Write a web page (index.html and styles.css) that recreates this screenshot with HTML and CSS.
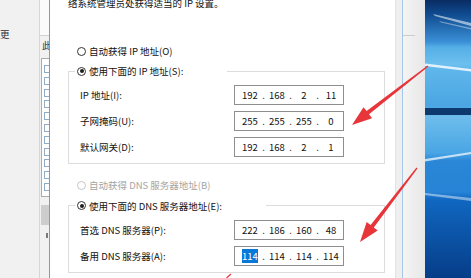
FILE: index.html
```html
<!DOCTYPE html>
<html lang="zh-CN">
<head>
<meta charset="utf-8">
<title>IPv4 属性</title>
<link rel="stylesheet" href="styles.css">
</head>
<body>
<div class="screen">
  <div class="bgwin">
    <div class="bgwin-main"><span class="bg-text">更</span></div>
    <div class="bgwin-col">
      <div class="lw-box"></div>
      <div class="lw-label">此</div>
      <div class="lw-list">
        <i class="lw-item"></i><i class="lw-item"></i><i class="lw-item"></i><i class="lw-item"></i>
        <i class="lw-item"></i><i class="lw-item"></i><i class="lw-item"></i><i class="lw-item"></i>
        <i class="lw-item"></i><i class="lw-item"></i><i class="lw-item"></i>
      </div>
      <div class="lw-btn"></div>
      <div class="lw-mark"></div>
    </div>
  </div>
  <div class="dlg-edge"></div>

  <div class="dialog">
    <p class="intro">络系统管理员处获得适当的 IP 设置。</p>

    <div class="radio-row opt-first"><span class="radio"></span>自动获得 IP 地址(O)</div>

    <fieldset class="group">
      <legend><span class="radio-row"><span class="radio checked"></span>使用下面的 IP 地址(S):</span></legend>
      <div class="fields">
        <label class="lbl">IP 地址(I):</label>
        <div class="ip"><span class="f">192</span><span class="d">.</span><span class="f">168</span><span class="d">.</span><span class="f">2</span><span class="d">.</span><span class="f">11</span></div>
        <label class="lbl">子网掩码(U):</label>
        <div class="ip"><span class="f">255</span><span class="d">.</span><span class="f">255</span><span class="d">.</span><span class="f">255</span><span class="d">.</span><span class="f">0</span></div>
        <label class="lbl">默认网关(D):</label>
        <div class="ip"><span class="f">192</span><span class="d">.</span><span class="f">168</span><span class="d">.</span><span class="f">2</span><span class="d">.</span><span class="f">1</span></div>
      </div>
    </fieldset>

    <div class="radio-row opt-dns-auto is-disabled"><span class="radio"></span>自动获得 DNS 服务器地址(B)</div>

    <fieldset class="group group-dns">
      <legend><span class="radio-row"><span class="radio checked"></span>使用下面的 DNS 服务器地址(E):</span></legend>
      <div class="fields">
        <label class="lbl">首选 DNS 服务器(P):</label>
        <div class="ip"><span class="f">222</span><span class="d">.</span><span class="f">186</span><span class="d">.</span><span class="f">160</span><span class="d">.</span><span class="f">48</span></div>
        <label class="lbl">备用 DNS 服务器(A):</label>
        <div class="ip"><span class="f"><span class="sel">114</span></span><span class="d">.</span><span class="f">114</span><span class="d">.</span><span class="f">114</span><span class="d">.</span><span class="f">114</span></div>
      </div>
    </fieldset>
  </div>

  <div class="frame">
    <div class="frame-a"></div>
    <div class="frame-line"></div>
    <div class="frame-b"><div class="rule"></div></div>
  </div>

  <div class="wallpaper">
    <svg width="46" height="278" viewBox="0 0 46 278">
      <defs>
        <linearGradient id="sky" x1="0" y1="0" x2="0" y2="278" gradientUnits="userSpaceOnUse">
          <stop offset="0" stop-color="#0a2c62"/>
          <stop offset="0.05" stop-color="#0f4a8e"/>
          <stop offset="0.15" stop-color="#3a8fd6"/>
          <stop offset="0.17" stop-color="#55aee6"/>
          <stop offset="0.23" stop-color="#6cc0ee"/>
          <stop offset="0.25" stop-color="#5fb6eb"/>
          <stop offset="0.38" stop-color="#4aa5e2"/>
          <stop offset="0.42" stop-color="#6dbdec"/>
          <stop offset="0.55" stop-color="#49a5e4"/>
          <stop offset="0.58" stop-color="#2a86d6"/>
          <stop offset="0.69" stop-color="#2784d6"/>
          <stop offset="0.72" stop-color="#1067c0"/>
          <stop offset="1" stop-color="#063d88"/>
        </linearGradient>
      </defs>
      <rect width="46" height="278" fill="url(#sky)"/>
      <polygon points="8,14 46,23 46,26 10,16" fill="#ffffff" opacity="0.55"/>
      <polygon points="14,21 46,28 46,29.5 16,22.5" fill="#ffffff" opacity="0.4"/>
      <polygon points="0,63.5 46,69 46,71.5 0,66" fill="#ffffff" opacity="0.8"/>
      <rect y="108" width="46" height="7" fill="#0c3a6e"/>
      <polygon points="0,159 46,152 46,154 0,161.5" fill="#ffffff" opacity="0.7"/>
      <polygon points="0,193 46,198 46,201 0,195" fill="#ffffff" opacity="0.45"/>
    </svg>
  </div>

  <svg class="arrows" width="471" height="278" viewBox="0 0 471 278">
    <polygon points="427.6,65.5 366.6,111.1 363.5,107.2 352,125 372.1,118.2 369,114.3 428.4,66.5" fill="#e8353a"/>
    <polygon points="416.5,167.6 370.6,225 366.7,221.9 360,242 377.7,230.5 373.8,227.4 417.5,168.4" fill="#e8353a"/>
    <line x1="231" y1="274" x2="226.5" y2="278" stroke="#e8353a" stroke-width="1.2"/>
  </svg>
</div>
</body>
</html>
```

FILE: styles.css
```css
* { box-sizing: border-box; }

html, body {
  margin: 0;
  padding: 0;
}

body {
  width: 471px;
  height: 278px;
  overflow: hidden;
  font-family: "Noto Sans CJK SC", "Noto Sans", sans-serif;
  font-size: 9.5px;
  color: #111;
  background: #f0f0f0;
}

.screen {
  position: relative;
  display: flex;
  width: 471px;
  height: 278px;
  overflow: hidden;
}

/* background window on the left */
.bgwin {
  width: 49px;
  flex: none;
  display: flex;
  background: #f1f1f1;
}

.bgwin-main {
  width: 40px;
  border-right: 1px solid #d6d6d6;
  padding-top: 28px;
  overflow: hidden;
}

.bg-text {
  display: block;
  line-height: 12px;
  color: #333;
}

.bgwin-col {
  width: 9px;
  display: flex;
  flex-direction: column;
}

.lw-box {
  height: 36px;
  background: #fbfbfb;
  border-bottom: 1px solid #d3d3d3;
}

.lw-label {
  margin-top: 4px;
  line-height: 11px;
  padding-left: 2px;
  color: #333;
}

.lw-list {
  margin-top: 7px;
  margin-left: 1px;
  height: 139px;
  background: #fff;
  border: 1px solid #acacac;
  border-right: none;
  padding-top: 3px;
  display: flex;
  flex-direction: column;
}

.lw-item {
  display: block;
  height: 11.8px;
  position: relative;
}

.lw-item::before {
  content: "";
  position: absolute;
  left: 2px;
  top: 3px;
  width: 4px;
  height: 6px;
  border: 1px solid #8fadc9;
  border-right: none;
}

.lw-btn {
  margin-top: 8px;
  margin-left: 1px;
  height: 20px;
  background: #cdcdcd;
}

.lw-mark {
  margin-top: 8px;
  margin-left: 6px;
  width: 2px;
  height: 5px;
  background: #7a7a7a;
}

.dlg-edge {
  width: 1px;
  flex: none;
  background: #6b9fd6;
}

/* dialog */
.dialog {
  width: 345px;
  flex: none;
  background: #fff;
  padding: 0 10px 0 18px;
}

.intro {
  margin: -3px 0 0;
  line-height: 12px;
  white-space: nowrap;
}

.radio-row {
  display: flex;
  align-items: center;
  height: 14px;
  line-height: 14px;
  white-space: nowrap;
}

.opt-first {
  margin-top: 35px;
  margin-left: 9px;
}

.opt-dns-auto {
  margin-top: 14px;
  margin-left: 9px;
}

.radio {
  position: relative;
  flex: none;
  width: 9px;
  height: 9px;
  border: 1px solid #333;
  border-radius: 50%;
  margin-right: 3px;
  background: #fff;
}

.radio.checked::after {
  content: "";
  position: absolute;
  left: 1.5px;
  top: 1.5px;
  width: 4px;
  height: 4px;
  border-radius: 50%;
  background: #1e1e1e;
}

.is-disabled {
  color: #a4a4a4;
}

.is-disabled .radio {
  border-color: #c6c6c6;
}

.group {
  margin: 6px 0 0;
  padding: 0 0 6px;
  border: 1px solid #dcdcdc;
  min-width: 0;
}

.group-dns {
  margin-top: 6.5px;
  padding-bottom: 6.5px;
}

.group legend {
  margin-left: 6px;
  padding: 0 44px 0 2px;
}

.fields {
  display: grid;
  grid-template-columns: 154px 110px;
  row-gap: 6px;
  align-items: center;
  padding-left: 11px;
  margin-top: 7px;
}

.lbl {
  color: #111;
  white-space: nowrap;
}

.ip {
  height: 20px;
  border: 1px solid #8e8e8e;
  display: flex;
  align-items: center;
  padding-left: 5px;
  line-height: 14px;
  color: #111;
  background: #fff;
}

.ip .f {
  width: 20px;
  text-align: center;
}

.ip .d {
  width: 7px;
  text-align: center;
}

.sel {
  background: #0a78d7;
  color: #fff;
}

/* window frame on the right */
.frame {
  width: 30px;
  flex: none;
  display: flex;
}

.frame-a {
  width: 7px;
  background: #efefef;
  border-left: 1px solid #e3e3e3;
}

.frame-line {
  width: 1px;
  background: #a6c7e7;
}

.frame-b {
  width: 22px;
  background: linear-gradient(to right, #f4f4f4, #e7e7e7);
  padding-top: 35px;
}

.frame-b .rule {
  width: 12px;
  height: 1px;
  background: #cccccc;
}

.wallpaper {
  width: 46px;
  flex: none;
}

.wallpaper svg {
  display: block;
}

.arrows {
  position: absolute;
  left: 0;
  top: 0;
  pointer-events: none;
}
```
